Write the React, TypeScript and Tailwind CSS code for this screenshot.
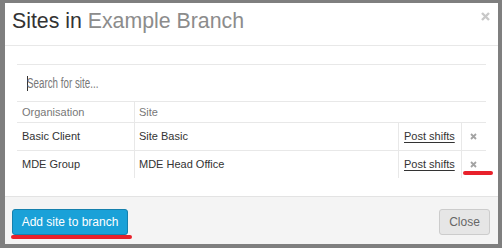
const rows = [
  { org: 'Basic Client', site: 'Site Basic' },
  { org: 'MDE Group', site: 'MDE Head Office' },
];

function RemoveIcon() {
  return (
    <svg width="7" height="7" viewBox="0 0 7 7" className="text-[#a3a3a3]">
      <path d="M1 1L6 6M6 1L1 6" stroke="currentColor" strokeWidth="1.8" />
    </svg>
  );
}

export default function App() {
  return (
    <div className="relative h-[248px] w-[502px] bg-[#7f7f7f] pl-[5px] pt-[3px] font-['Liberation_Sans',Arial,sans-serif]">
      <div className="flex h-[241px] w-[493px] flex-col bg-white">
        {/* header */}
        <div className="flex h-[43px] shrink-0 items-start border-b border-[#e8e8e8] pl-[7px] pr-[8px] pt-[6px]">
          <h4 className="text-[21.3px] leading-[24px] text-[#333]">
            Sites in <span className="text-[#8c8c8c]">Example Branch</span>
          </h4>
          <svg width="9" height="9" viewBox="0 0 9 9" className="ml-auto mt-[3px] text-[#c8c8c8]">
            <path d="M1 1L8 8M8 1L1 8" stroke="currentColor" strokeWidth="2.4" />
          </svg>
        </div>

        {/* body */}
        <div className="h-[150px] shrink-0 px-[12px] pt-[18px]">
          <div className="border-t border-[#e8e8e8]" />
          <div className="flex h-[37px] items-center border-b border-[#e8e8e8] pl-[10px]">
            <span className="h-[15px] w-px bg-[#333]" />
            <span className="-ml-px inline-block origin-left scale-x-[0.7] text-[14px] text-[#777]">
              Search for site...
            </span>
          </div>

          <div className="flex h-[21px] border-b border-[#e8e8e8] text-[11px] text-[#777]">
            <div className="flex w-[118px] items-center border-r border-[#e8e8e8] pl-[5px]">Organisation</div>
            <div className="flex items-center pl-[4px]">Site</div>
          </div>

          {rows.map((r, i) => (
            <div
              key={r.org}
              className={`flex text-[11px] text-[#333] ${i === 0 ? 'h-[28px] border-b border-[#e8e8e8]' : 'h-[27px]'}`}
            >
              <div className="flex w-[118px] items-center border-r border-[#e8e8e8] pl-[5px]">{r.org}</div>
              <div className="flex w-[264px] items-center border-r border-[#e8e8e8] pl-[4px]">{r.site}</div>
              <div className="flex w-[63px] items-center border-r border-[#e8e8e8] pl-[5px]">
                <span className="underline underline-offset-[2px]">Post shifts</span>
              </div>
              <div className="flex w-[24px] items-center justify-center pr-[2px]">
                <RemoveIcon />
              </div>
            </div>
          ))}
        </div>

        {/* footer */}
        <div className="flex flex-1 items-start justify-between border-t border-[#e3e3e3] bg-[#f4f4f4] pl-[7px] pr-[8px] pt-[12px]">
          <button className="h-[26px] w-[116px] rounded-[3px] border border-[#1580ad] bg-[#1aa1d8] text-[12px] text-white">
            Add site to branch
          </button>
          <button className="h-[26px] w-[51px] rounded-[3px] border border-[#cccccc] bg-[#e6e6e6] text-[12px] text-[#666]">
            Close
          </button>
        </div>
      </div>

      {/* red annotation marks */}
      <div className="absolute left-[463px] top-[171px] h-[4px] w-[30px] rounded-full bg-[#e8212b]" />
      <div className="absolute left-[11px] top-[235px] h-[4px] w-[121px] rounded-full bg-[#e8212b]" />
    </div>
  );
}
